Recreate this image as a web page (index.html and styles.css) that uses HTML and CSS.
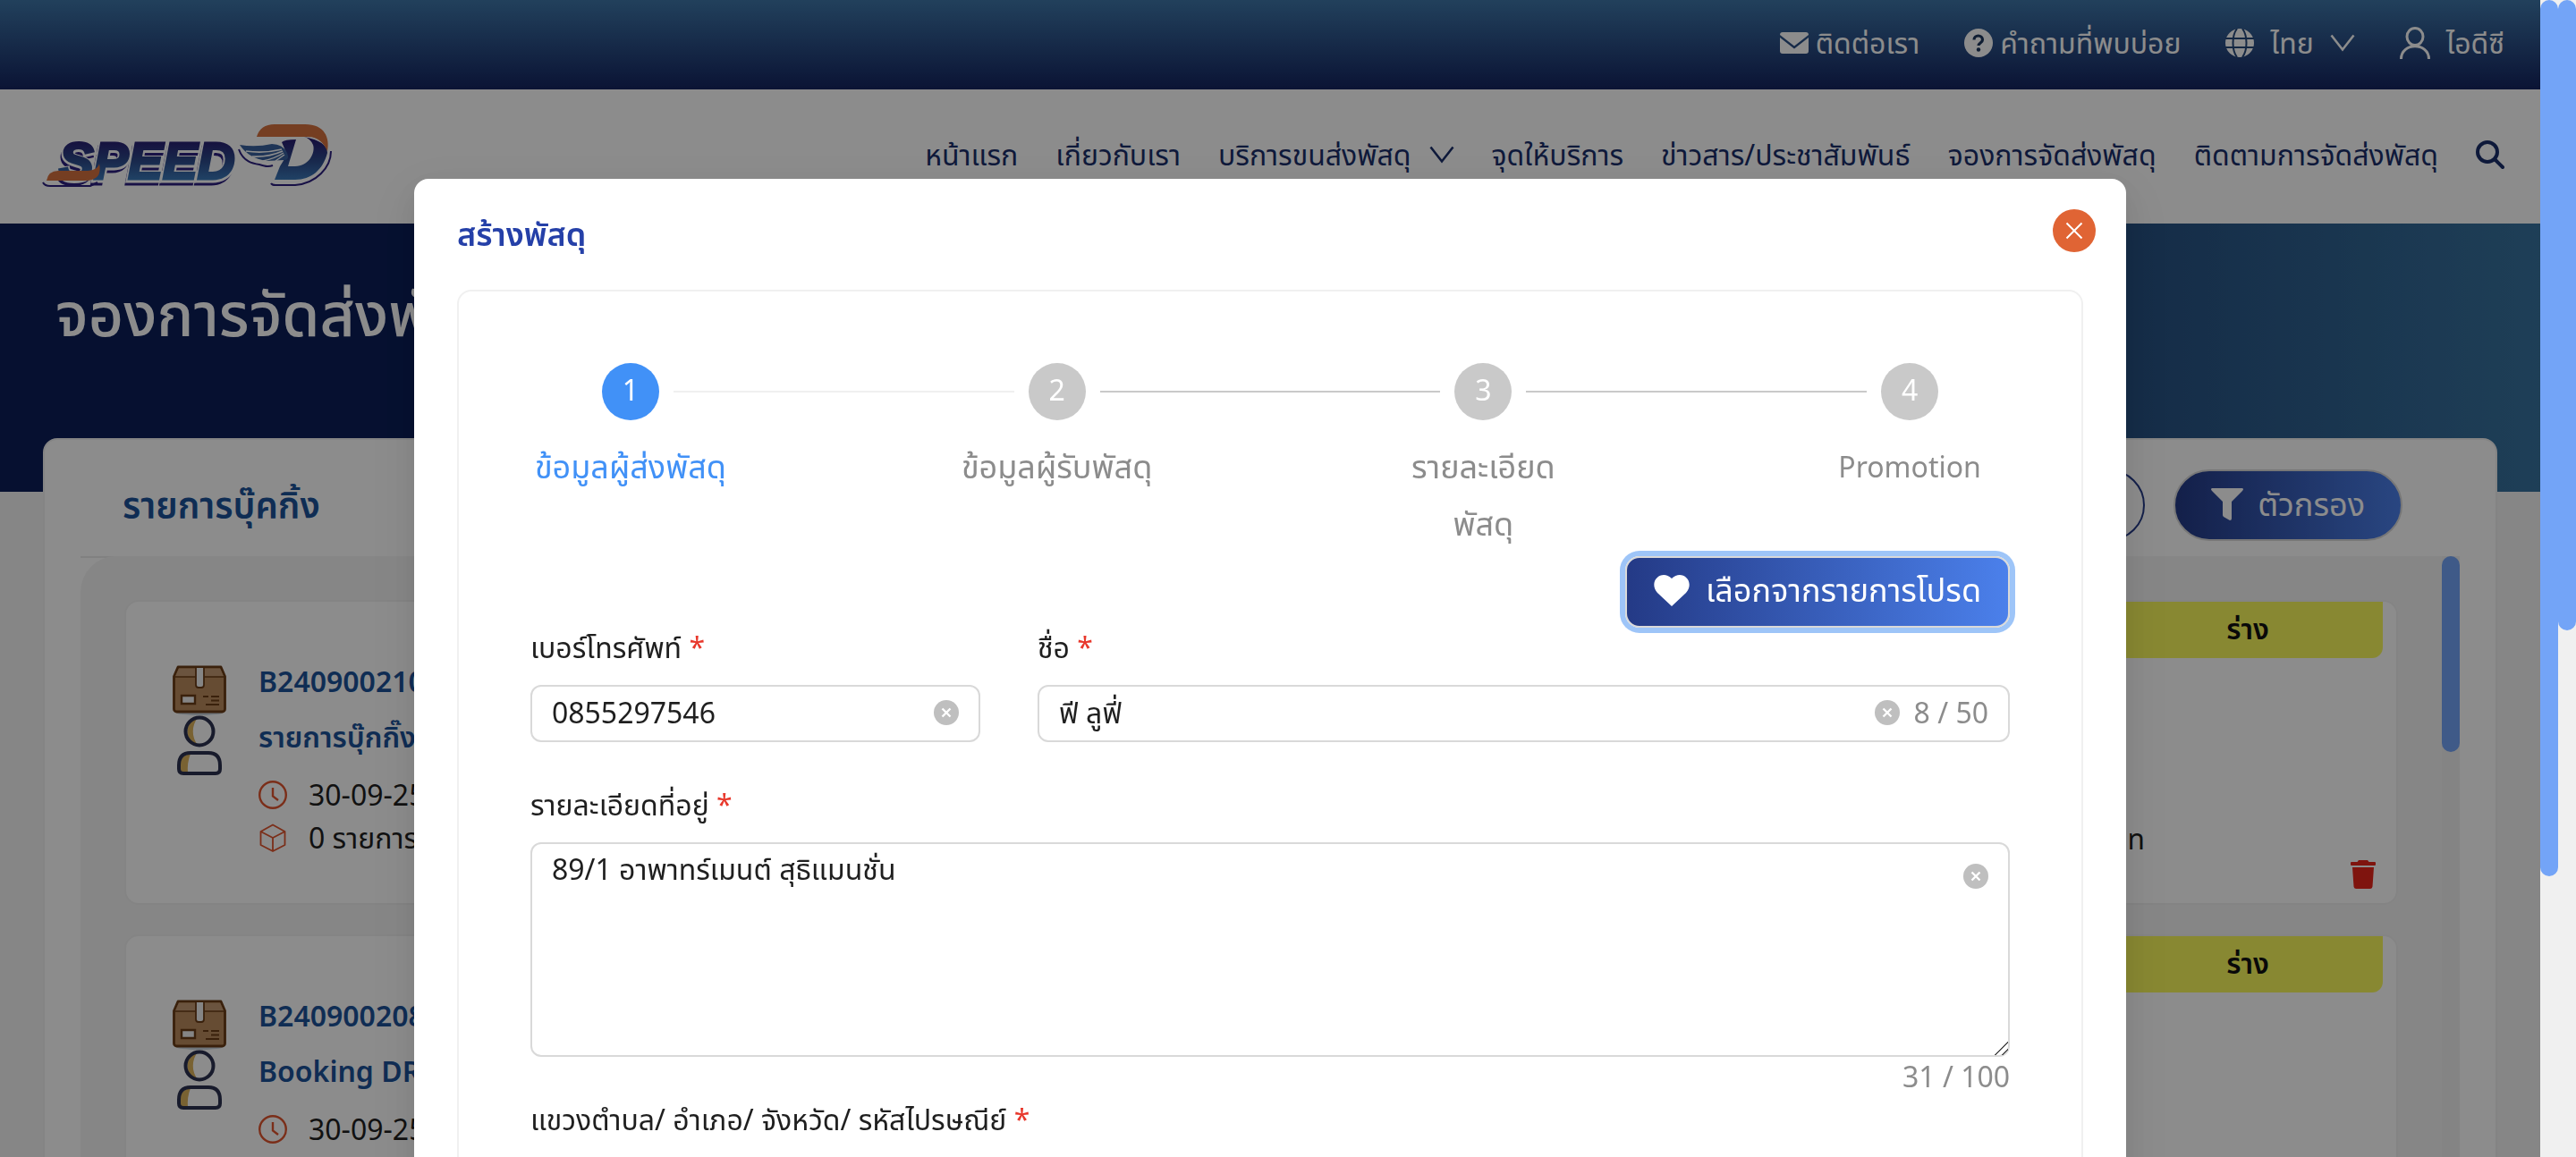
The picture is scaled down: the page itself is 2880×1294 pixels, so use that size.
FILE: index.html
```html
<!DOCTYPE html>
<html lang="th">
<head>
<meta charset="utf-8">
<meta name="viewport" content="width=device-width, initial-scale=1">
<title>SPEED-D - จองการจัดส่งพัสดุ</title>
<link rel="stylesheet" href="styles.css">
</head>
<body>
<svg class="sprite" aria-hidden="true">
  <defs>
    <symbol id="i-down" viewBox="0 0 28 20"><path d="M1.500 1.500 14 17.500 26.500 1.500" fill="none" stroke="currentColor" stroke-width="2.600"/></symbol>
    <symbol id="i-clear" viewBox="0 0 28 28"><circle cx="14" cy="14" r="14" fill="#bfbfbf"/><path d="M9.500 9.500l9 9m0-9l-9 9" stroke="#fff" stroke-width="2.400"/></symbol>
    <symbol id="i-clock" viewBox="0 0 32 32"><g fill="none" stroke="currentColor" stroke-width="2.400"><circle cx="16" cy="16" r="14.800"/><path d="M16 8v9.500l6 4.500"/></g></symbol>
    <symbol id="i-cube" viewBox="0 0 32 32"><path d="M16 1.500 29.500 9v15L16 31 2.500 24V9zM2.500 9 16 16l13.500-7M16 16v15" fill="none" stroke="currentColor" stroke-width="1.800" stroke-linejoin="round"/></symbol>
    <symbol id="i-trash" viewBox="0 0 28 32"><path d="M9 0h10l1.500 2H27a1 1 0 0 1 1 1v2a1 1 0 0 1-1 1H1a1 1 0 0 1-1-1V3a1 1 0 0 1 1-1h6.500zM2 8h24l-1.500 21.500a2.600 2.600 0 0 1-2.500 2.500H6a2.600 2.600 0 0 1-2.500-2.500z" fill="currentColor"/></symbol>
    <symbol id="i-box" viewBox="0 0 60 56">
      <ellipse cx="30" cy="53" rx="26" ry="3" fill="#c9d4de"/>
      <path d="M6 2h48l4.500 10.500V49a3 3 0 0 1-3 3h-51a3 3 0 0 1-3-3V12.500z" fill="#ba8a5d" stroke="#6b3c17" stroke-width="2.800" stroke-linejoin="round"/>
      <path d="M7 3.500h46L57 12.500H3z" fill="#c39a73"/><path d="M2 13h56" stroke="#6b3c17" stroke-width="1.600"/>
      <path d="M26 2h9v20a3 3 0 0 1-3 3h-3a3 3 0 0 1-3-3z" fill="#f2f2f2" stroke="#6b3c17" stroke-width="1.800"/>
      <path d="M10 34h15v9H10z" fill="#f2f2f2" stroke="#6b3c17" stroke-width="2.400"/>
      <path d="M34 35h6m3 0h9m-9 4.500h9M37 44h15" stroke="#6b3c17" stroke-width="1.800"/>
    </symbol>
    <symbol id="i-person" viewBox="0 0 52 68">
      <circle cx="26" cy="18" r="15.500" fill="#fff"/><path d="M24 3a15.500 15.500 0 0 0 0 30c-7-8-7-22 0-30z" fill="#ddb35c"/>
      <circle cx="26" cy="18" r="15.500" fill="none" stroke="#2d3250" stroke-width="4"/>
      <path d="M3 60V56Q3 42 16 42h20q13 0 13 14v4q0 5-5 5H8q-5 0-5-5z" fill="#fff"/>
      <path d="M4 62V54q1-9 12-11-4 10-3 22H8z" fill="#ddb35c"/>
      <path d="M3 60V56Q3 42 16 42h20q13 0 13 14v4q0 5-5 5H8q-5 0-5-5z" fill="none" stroke="#2d3250" stroke-width="4"/>
    </symbol>
  </defs>
</svg>

<div class="page">
  <div class="topbar">
    <a class="topbar-link" href="#contact"><svg width="32" height="24" viewBox="0 0 32 24"><path d="M3 0h26a3 3 0 0 1 3 3L16 15.500 0 3a3 3 0 0 1 3-3zM0 6l16 12.500L32 6v15a3 3 0 0 1-3 3H3a3 3 0 0 1-3-3z" fill="currentColor"/></svg>ติดต่อเรา</a>
    <a class="topbar-link" href="#faq"><svg width="32" height="32" viewBox="0 0 32 32"><circle cx="16" cy="16" r="16" fill="currentColor"/><path d="M11 12.500C11 6.500 20.500 6.500 20.500 12.500c0 3.500-4.500 3.500-4.500 6.500" fill="none" stroke="#1c365c" stroke-width="3.200"/><circle cx="16" cy="23.500" r="2.200" fill="#1c365c"/></svg>คำถามที่พบบ่อย</a>
    <a class="topbar-link topbar-wide" href="#lang"><svg width="32" height="32" viewBox="0 0 32 32"><circle cx="16" cy="16" r="16" fill="currentColor"/><path d="M0 11h32M0 21h32" stroke="#26487a" stroke-width="2"/><path d="M13 0C7 8 7 24 13 32M19 0c6 8 6 24 0 32" fill="none" stroke="#26487a" stroke-width="2"/></svg>ไทย<svg class="caret" width="28" height="20"><use href="#i-down"/></svg></a>
    <a class="topbar-link topbar-wide" href="#account"><svg width="34" height="36" viewBox="0 0 34 36"><g fill="none" stroke="currentColor" stroke-width="3"><ellipse cx="17" cy="11" rx="9" ry="9.500"/><path d="M1.500 36C1.500 17 32.500 17 32.500 36"/></g></svg>ไอดีซี</a>
  </div>

  <header class="header">
    <a class="logo" href="#home" aria-label="SPEED-D">
      <svg width="336" height="84" viewBox="44 134 336 84">
        <defs>
          <linearGradient id="lg" gradientUnits="userSpaceOnUse" x1="0" y1="156" x2="0" y2="202"><stop offset="0" stop-color="#281a70"/><stop offset=".5" stop-color="#2c4687"/><stop offset="1" stop-color="#3b78b8"/></linearGradient>
        </defs>
        <g class="logo-word">
          <text x="64" y="206" fill="#2c2080" stroke="#2c2080" stroke-width="5">SPEED</text>
          <text x="66" y="202" fill="#fff" stroke="#fff" stroke-width="7">SPEED</text>
          <text x="66" y="201" fill="url(#lg)" stroke="url(#lg)" stroke-width="3">SPEED</text>
        </g>
        <path d="M52 203q2-11 13-11h30q14 0 16-8 4 19-16 19z" fill="#d5713f"/>
        <path d="M48 205q2 4 8 4h45l8-4" fill="none" stroke="#2c2080" stroke-width="2"/>
        <path d="M303 206q1 2 5 2h22c24-2 40-20 40-38" fill="none" stroke="#2c2080" stroke-width="2"/>
        <path d="M340 154Q366 159 366 172C361 191 348 202 330 202H307L313 187H330C345 187 353 172 350 163Q347 156 340 154zM315 160Q318 157 331 157L322 187H313L321 174z" fill="url(#lg)"/>
        <path d="M287 154q4-14 20-14h34c22 0 28 15 25 30-4-9-10-16-22-16z" fill="#d5713f"/>
        <path d="M268 163q18 3 36-1 12 0 17 10 3 8-3 8l-20 1q-20-3-30-18z" fill="#3a629e"/>
        <path d="M275 170q20 3 40-2M282 176q18 1 34-6M294 181q14-3 23-9M308 181l10-7" fill="none" stroke="#fff" stroke-width="1.500"/>
        <path d="M267 168c5 14 16 16 23 17 7 2 10 3 15 1" fill="none" stroke="#2c2080" stroke-width="2"/>
      </svg>
    </a>
    <nav class="nav">
      <a href="#home">หน้าแรก</a>
      <a href="#about">เกี่ยวกับเรา</a>
      <a href="#service">บริการขนส่งพัสดุ<svg class="caret" width="28" height="20"><use href="#i-down"/></svg></a>
      <a href="#points">จุดให้บริการ</a>
      <a href="#news">ข่าวสาร/ประชาสัมพันธ์</a>
      <a href="#booking">จองการจัดส่งพัสดุ</a>
      <a href="#tracking">ติดตามการจัดส่งพัสดุ</a>
      <a href="#search" aria-label="ค้นหา"><svg width="32" height="32" viewBox="0 0 32 32"><g fill="none" stroke="currentColor" stroke-width="4"><circle cx="13" cy="13" r="11"/><path d="M21 21l9 9" stroke-linecap="round"/></g></svg></a>
    </nav>
  </header>

  <section class="hero"><h1>จองการจัดส่งพัสดุ</h1></section>

  <main class="bookings">
    <div class="bookings-head">
      <h2>รายการบุ๊คกิ้ง</h2>
      <div class="bookings-tools">
        <button class="pill pill-outline" type="button">สร้างบุ๊คกิ้ง</button>
        <button class="pill pill-filled" type="button"><svg width="36" height="36" viewBox="0 0 36 36"><path d="M1 0h34q2 1 0 3L23 15v19q0 2-2 2l-7-4q-1-1-1-2V15L1 3q-2-2 0-3z" fill="currentColor"/></svg>ตัวกรอง</button>
      </div>
    </div>
    <div class="bookings-list">
      <div class="bookings-items">
        <article class="booking">
          <div class="booking-art"><svg width="60" height="56"><use href="#i-box"/></svg><svg width="52" height="68"><use href="#i-person"/></svg></div>
          <div class="booking-info">
            <h3>B240900210</h3>
            <h3>รายการบุ๊กกิ๊ง</h3>
            <p><svg width="32" height="32"><use href="#i-clock"/></svg>30-09-25</p>
            <p><svg width="32" height="32"><use href="#i-cube"/></svg>0 รายการ</p>
          </div>
          <div class="booking-side">
            <span class="ribbon">ร่าง</span>
            <span class="price">0 บาท</span>
            <button class="trash" type="button" aria-label="ลบ"><svg width="28" height="32"><use href="#i-trash"/></svg></button>
          </div>
        </article>
        <article class="booking">
          <div class="booking-art"><svg width="60" height="56"><use href="#i-box"/></svg><svg width="52" height="68"><use href="#i-person"/></svg></div>
          <div class="booking-info">
            <h3>B240900208</h3>
            <h3>Booking DRY</h3>
            <p><svg width="32" height="32"><use href="#i-clock"/></svg>30-09-25</p>
          </div>
          <div class="booking-side">
            <span class="ribbon">ร่าง</span>
          </div>
        </article>
      </div>
      <div class="track"><div class="thumb thumb-list"></div></div>
    </div>
  </main>
</div>

<div class="overlay">
  <div class="modal" role="dialog" aria-modal="true" aria-labelledby="modal-title">
    <div class="modal-head">
      <h2 id="modal-title">สร้างพัสดุ</h2>
      <button class="close" type="button" aria-label="ปิด"><svg width="20" height="20" viewBox="0 0 20 20"><path d="M1.500 1.500l17 17m0-17l-17 17" stroke="currentColor" stroke-width="2"/></svg></button>
    </div>
    <form class="panel">
      <ol class="steps">
        <li class="step step-active"><div class="step-head"><span class="dot">1</span><i class="line"></i></div><div class="step-label">ข้อมูลผู้ส่งพัสดุ</div></li>
        <li class="step"><div class="step-head"><span class="dot">2</span><i class="line"></i></div><div class="step-label">ข้อมูลผู้รับพัสดุ</div></li>
        <li class="step"><div class="step-head"><span class="dot">3</span><i class="line"></i></div><div class="step-label">รายละเอียด<br>พัสดุ</div></li>
        <li class="step"><div class="step-head"><span class="dot">4</span></div><div class="step-label" lang="en">Promotion</div></li>
      </ol>
      <div class="actions">
        <button class="favorite" type="button"><svg width="40" height="35" viewBox="0 0 40 35"><path d="M20 35 4 20C-7 7 9-7 20 4 31-7 47 7 36 20z" fill="currentColor"/></svg>เลือกจากรายการโปรด</button>
      </div>
      <div class="row">
        <div class="field">
          <label for="phone">เบอร์โทรศัพท์ <b>*</b></label>
          <div class="control"><input id="phone" type="text" value="0855297546"><svg width="28" height="28"><use href="#i-clear"/></svg></div>
        </div>
        <div class="field">
          <label for="name">ชื่อ <b>*</b></label>
          <div class="control"><input id="name" type="text" value="ฟี ลูฟี่"><svg width="28" height="28"><use href="#i-clear"/></svg><span class="count">8 / 50</span></div>
        </div>
      </div>
      <div class="field">
        <label for="address">รายละเอียดที่อยู่ <b>*</b></label>
        <div class="control control-area"><textarea id="address">89/1 อาพาทร์เมนต์ สุธิแมนชั่น</textarea><svg width="28" height="28"><use href="#i-clear"/></svg></div>
        <div class="count count-below">31 / 100</div>
      </div>
      <div class="field">
        <label for="area">แขวงตำบล/ อำเภอ/ จังหวัด/ รหัสไปรษณีย์ <b>*</b></label>
        <div class="control"><input id="area" type="text"></div>
      </div>
    </form>
  </div>
</div>
<div class="scrollbars" aria-hidden="true">
  <div class="track"><div class="thumb thumb-modal"></div></div>
  <div class="track"><div class="thumb thumb-page"></div></div>
</div>
</body>
</html>
```
FILE: styles.css
```css
* { box-sizing: border-box; }
html, body { height: 100%; overflow: hidden; }
body, button, input, textarea { font-family: "Noto Sans", "Noto Sans Thai", sans-serif; font-size: 32px; line-height: 48px; }
body { margin: 0; display: flex; color: #1f1f1f; background: #f4f4f4; }
h1, h2, h3, p, ol { margin: 0; padding: 0; }
a { color: inherit; text-decoration: none; }
svg { flex: none; }
button { cursor: pointer; }
.sprite { position: absolute; width: 0; height: 0; }

.page { flex: 1; min-width: 0; height: 100vh; overflow: hidden; }
.topbar { height: 100px; padding: 0 40px 4px; display: flex; align-items: center; justify-content: flex-end; gap: 50px; color: #fff; background: linear-gradient(#3e76a8, #142460); white-space: nowrap; }
.topbar-link { display: flex; align-items: center; gap: 8px; }
.topbar-wide { gap: 18px; }

.header { height: 150px; padding: 0 40px 4px 44px; display: flex; align-items: center; justify-content: space-between; background: #fff; color: #1a2f6b; }
.logo { display: flex; padding-top: 4px; }
.logo-word { font: italic 700 58px "Liberation Sans", Arial, sans-serif; }
.nav { display: flex; align-items: center; gap: 42px; white-space: nowrap; }
.nav a { display: flex; align-items: center; gap: 20px; }

.hero { height: 300px; padding: 52px 62px; color: #fff; background: linear-gradient(90deg, #0b1e58 60%, #38739f); }
.hero h1 { font-size: 68px; line-height: 96px; font-weight: 500; white-space: nowrap; }

.bookings { position: relative; margin: -60px 48px 0; padding: 0 40px; height: 1200px; border: 2px solid #f0f0f0; border-radius: 16px; background: #fff; }
.bookings-head { height: 130px; padding: 16px 64px 0 47px; display: flex; align-items: center; justify-content: space-between; box-shadow: 0 2px 0 #ececec; }
.bookings-head h2 { font-size: 40px; line-height: 48px; font-weight: 600; color: #1c5299; white-space: nowrap; }
.bookings-tools { display: flex; gap: 32px; }
.pill { height: 80px; border-radius: 40px; padding: 0 40px 2px; display: flex; align-items: center; gap: 16px; font-size: 36px; white-space: nowrap; }
.pill-outline { border: 2px solid #243a86; background: #fff; color: #243a86; }
.pill-filled { border: 2px solid #d9d9d9; color: #fff; background: linear-gradient(90deg, #243a86, #4b80eb); }

.bookings-list { position: relative; display: flex; height: 1060px; border-radius: 40px 0 0 0; background: #f5f5f5; }
.bookings-items { flex: 1; min-width: 0; padding: 49px; display: flex; flex-direction: column; gap: 33px; }
.booking { height: 341px; display: flex; border: 2px solid #f0f0f0; border-radius: 16px; background: #fff; }
.booking-art { width: 60px; margin-left: 52px; padding-top: 71px; display: flex; flex-direction: column; align-items: center; }
.booking-info { flex: 1; margin-left: 36px; padding-top: 58px; }
.booking-info h3 { font-size: 32px; line-height: 62px; font-weight: 600; color: #1c5299; }
.booking-info h3 + p { margin-top: 10px; }
.booking-info p { display: flex; align-items: center; gap: 24px; line-height: 48px; }
.booking-info svg { color: #e0552e; }
.booking-side { width: 302px; margin-right: 15px; display: flex; flex-direction: column; }
.ribbon { height: 63px; line-height: 60px; border-radius: 0 0 12px 12px; background: #f7f75b; color: #111; text-align: center; font-weight: 600; }
.price { width: 92px; margin: 178px 0 0 -56px; text-align: right; white-space: nowrap; }
.trash { align-self: flex-end; margin: 0 8px 0 0; padding: 0; border: 0; background: none; display: flex; color: #e8251b; }

.track { width: 20px; background: #f0f0f0; }
.thumb { border-radius: 10px; background: #73a4f7; }
.thumb-list { height: 219px; }
.thumb-modal { height: 75.7%; }
.thumb-page { height: 54.5%; }
.scrollbars { flex: none; display: flex; height: 100vh; }

.overlay { position: fixed; top: 0; right: 40px; bottom: 0; left: 0; padding-top: 200px; background: rgba(0, 0, 0, .45); overflow: hidden; }
.modal { width: 67.4%; margin: 0 auto; padding: 34px 48px 48px; border-radius: 16px; background: #fff; box-shadow: 0 12px 32px rgba(0, 0, 0, .08), 0 6px 12px -8px rgba(0, 0, 0, .12), 0 18px 56px 16px rgba(0, 0, 0, .05); }
.modal-head { height: 90px; display: flex; justify-content: space-between; }
.modal-head h2 { padding-top: 4px; font-size: 36px; line-height: 48px; font-weight: 600; color: #2540a8; }
.close { width: 48px; height: 48px; margin-right: -14px; padding: 0; border: 0; border-radius: 50%; display: flex; align-items: center; justify-content: center; background: #e06434; color: #fff; }
.panel { border: 2px solid #f0f0f0; border-radius: 16px; padding: 80px; }

.steps { display: flex; list-style: none; }
.step { flex: 1; min-width: 0; color: #8c8c8c; }
.step:last-child { flex: none; width: 224px; }
.step-head { display: flex; align-items: center; gap: 16px; padding-left: 80px; }
.dot { flex: none; width: 64px; height: 64px; border-radius: 50%; background: #c9c9c9; color: #fff; text-align: center; line-height: 60px; }
.line { flex: 1; height: 2px; margin-right: -64px; background: #c9c9c9; }
.step-label { width: 224px; height: 132px; margin-top: 20px; text-align: center; font-size: 36px; line-height: 64px; white-space: nowrap; }
.step-label:lang(en) { font-size: 32px; }
.step-active { color: #4191f7; }
.step-active .dot { background: #4191f7; }
.step-active .line { background: #f0f0f0; }

.actions { display: flex; justify-content: flex-end; }
.favorite { height: 80px; padding: 0 30px 4px; display: flex; align-items: center; gap: 18px; border: 2px solid #d9d9d9; border-radius: 16px; color: #fff; font-size: 36px; white-space: nowrap; background: linear-gradient(90deg, #243a86, #4b80eb); box-shadow: 0 0 0 6px #9ec5f8; }
.row { display: grid; grid-template-columns: 503fr 1087fr; gap: 64px; margin-bottom: 48px; }
.field { min-width: 0; }
.field label { display: block; padding-bottom: 20px; line-height: 44px; }
.field b { color: #e8382c; font-weight: 400; }
.control { display: flex; align-items: center; height: 64px; padding: 0 22px 2px; border: 2px solid #d9d9d9; border-radius: 12px; }
.control input, .control textarea { flex: 1; min-width: 0; padding: 0; border: 0; outline: 0; background: none; color: inherit; }
.count { margin-left: 16px; color: #8c8c8c; }
.control-area { position: relative; height: 240px; padding: 4px 0 0 22px; align-items: stretch; }
.control-area svg { position: absolute; top: 22px; right: 22px; }
.control-area textarea { padding-right: 60px; resize: vertical; }
.control-area textarea::-webkit-resizer { background: linear-gradient(135deg, transparent 48%, #555 48%, #555 54%, transparent 54%, transparent 76%, #555 76%, #555 82%, transparent 82%); }
.count-below { margin: 0; height: 48px; line-height: 44px; text-align: right; }
```
